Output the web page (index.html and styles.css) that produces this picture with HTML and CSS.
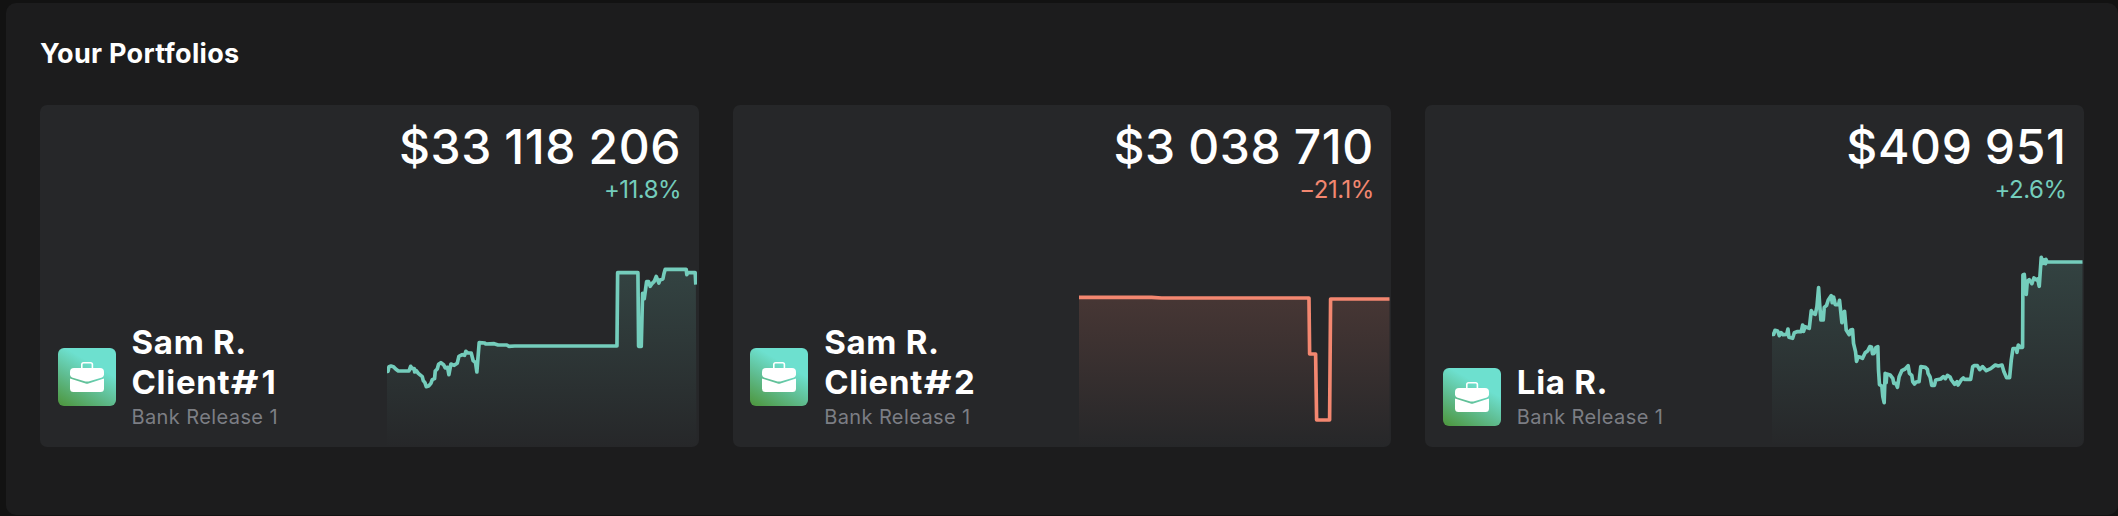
FILE: index.html
```
<!DOCTYPE html>
<html lang="en">
<head>
  <meta charset="UTF-8" />
  <meta name="viewport" content="width=device-width, initial-scale=1.0"/>
  <title>Your Portfolios</title>
  <link rel="stylesheet" href="styles.css">
</head>
<body>
  <svg class="defs" width="0" height="0">
    <defs>
      <linearGradient id="fillUp" x1="0" y1="0" x2="0" y2="1">
        <stop offset="0" stop-color="#74cdbc" stop-opacity="0.17"/>
        <stop offset="1" stop-color="#74cdbc" stop-opacity="0"/>
      </linearGradient>
      <linearGradient id="fillDown" x1="0" y1="0" x2="0" y2="1">
        <stop offset="0" stop-color="#f38770" stop-opacity="0.16"/>
        <stop offset="1" stop-color="#f38770" stop-opacity="0"/>
      </linearGradient>
      <symbol id="briefcase" viewBox="0 0 34 30">
        <path d="M11.8 7V2.6Q11.8 .8 13.6 .8H20.6Q22.4 .8 22.4 2.6V7" fill="none" stroke="#fff" stroke-width="1.6"/>
        <path d="M4 6H30Q34 6 34 10V12.5Q34 14.6 32 15.4L18.5 19.4Q17 19.8 15.5 19.4L2 15.4Q0 14.6 0 12.5V10Q0 6 4 6Z" fill="#fff"/>
        <path d="M0 16.6L15.6 21.6Q17 22 18.4 21.6L34 16.6V26.5Q34 30 30.5 30H3.5Q0 30 0 26.5Z" fill="#fff"/>
      </symbol>
    </defs>
  </svg>

  <section class="panel">
    <h2>Your Portfolios</h2>
    <div class="cards">

      <div class="card">
        <div class="owner">
          <div class="badge"><svg><use href="#briefcase"/></svg></div>
          <div>
            <div class="name">Sam R.<br>Client<span class="hash">#</span>1</div>
            <div class="bank">Bank Release 1</div>
          </div>
        </div>
        <div class="summary up">
          <div class="amount">$33 118 206</div>
          <div class="change">+11.8%</div>
          <svg class="chart" viewBox="36 -39 933 630" preserveAspectRatio="none">
            <path class="area" d="M36 364L42 349L54 350L70 363H102L107 349L120 362L143 380L156 410L166 404L178 386L182 363L190 343L198 338L212 353L218 352L222 374L227 343L245 342L252 319L267 314L274 304L289 309L295 332L302 338L306 366L312 278L400 286L420 288H727L729 68H790L792 289H800L803 130L809 145L816 96L827 108L845 80L853 98L865 85L872 58H935L937 72L940 68H962L964 104L966 591H36Z"/>
            <path class="line" d="M36 364H39L42 350L48 348L55 350L62 357L70 363H102L107 349L112 356L118 356L119 366L124 362L130 370L142 380L145 392L150 398L154 410L161 408L168 400L172 389L179 386L181 363L187 357L191 343L198 338L206 344L211 354L218 352L222 374L228 342L238 346L247 340L252 319L262 314L269 316L273 304L279 309L289 309L295 332L302 338L306 366L313 278L330 279L332 282L358 281L370 285L396 285L402 289L420 288H727L729 68H790L792 289H800L804 130L809 146L816 95H822L827 109L833 100L839 94L845 79L853 99L856 90L865 87L868 72L872 58H935L937 74L939 68H962L964 104"/>
          </svg>
        </div>
      </div>

      <div class="card">
        <div class="owner">
          <div class="badge"><svg><use href="#briefcase"/></svg></div>
          <div>
            <div class="name">Sam R.<br>Client<span class="hash">#</span>2</div>
            <div class="bank">Bank Release 1</div>
          </div>
        </div>
        <div class="summary down">
          <div class="amount">$3 038 710</div>
          <div class="change">−21.1%</div>
          <svg class="chart" viewBox="27 -99 933 630" preserveAspectRatio="none">
            <path class="area" d="M27 82H245L275 84H718L720 252H738L741 450H780L783 87H960V531H27Z"/>
            <path class="line" d="M27 82H245L275 84H718L720 252H738L741 450H780L783 87H960"/>
          </svg>
        </div>
      </div>

      <div class="card">
        <div class="owner">
          <div class="badge"><svg><use href="#briefcase"/></svg></div>
          <div>
            <div class="name">Lia R.</div>
            <div class="bank">Bank Release 1</div>
          </div>
        </div>
        <div class="summary up">
          <div class="amount">$409 951</div>
          <div class="change">+2.6%</div>
          <svg class="chart" viewBox="33 -9 933 630" preserveAspectRatio="none">
            <path class="area" d="M33 283L60 277L82 285L95 295L102 276L125 265L145 265L151 212L163 223L173 145L180 240L190 200L211 168L236 182L243 248L250 215L256 272L274 270L287 362L327 320L350 320L356 436L370 488L374 400L395 410L410 442L422 390L442 377L461 432L475 380L498 385L515 437L555 408L592 434L630 417L638 377L678 390L725 375L742 413L757 326L785 322L791 104L797 163L803 119L836 136L842 52L850 66H966V621H33Z"/>
            <path class="line" d="M33 283H38L42 271L50 273L55 287L60 278L66 284L77 283L81 267L84 292L95 295L100 278L108 275L121 275L125 255L128 274L132 260L145 265L151 212L156 220L163 223L168 200L173 143L176 190L180 240H187L190 202L197 196L202 180L211 167L214 188L218 171L223 194L233 194L236 181L243 248L246 222L251 214L256 270L265 284L269 270L275 269L278 310L284 335L287 364L292 350L299 352L305 355L313 338L321 332L327 320L332 321L335 341L340 340L345 323L351 320L353 390L356 434L363 438L366 470L370 488L373 400L376 428L378 402L388 405L396 415L399 430L405 430L410 442L415 410L423 392L433 387L442 377L446 400L453 406L456 425L461 432L466 426L475 425L480 380L494 382L500 388L502 400L508 411L513 436H521L525 420L540 417L548 410L554 416L560 406L568 411L572 420L582 433L589 425L592 435L602 419L608 414L612 418H630L636 380L640 377H650L657 389L666 380L677 392L690 386L704 375L713 378L724 375L730 395L738 413H747L752 360L757 326L768 326L769 337L773 315L780 322H786L787 105L791 103L797 163L800 125L806 119L814 131L820 114L828 120L831 117L836 139L842 52L848 70L851 60L855 71L856 58L860 66H966"/>
          </svg>
        </div>
      </div>

    </div>
  </section>
</body>
</html>
```
FILE: styles.css
```
* {
  box-sizing: border-box;
  margin: 0;
  padding: 0;
}

body {
  background-color: #121212;
  font-family: Inter, "Liberation Sans", sans-serif;
  color: #fff;
  height: 516px;
  padding: 3px 0 1px 6px;
  overflow: hidden;
}

.defs {
  position: absolute;
}

.panel {
  height: 512px;
  background-color: #1c1c1d;
  border-radius: 10px;
  padding: 35px 34px 0;
}

h2 {
  font-size: 27px;
  font-weight: 700;
  line-height: 32px;
  letter-spacing: 0.3px;
}

.cards {
  display: grid;
  grid-template-columns: repeat(3, 1fr);
  gap: 34px;
  margin-top: 35px;
}

.card {
  display: flex;
  justify-content: space-between;
  height: 342px;
  background-color: #262729;
  border-radius: 7px;
  overflow: hidden;
}

.owner {
  display: flex;
  align-items: center;
  align-self: flex-end;
  gap: 16px;
  padding: 0 0 15px 17.5px;
}

.badge {
  display: flex;
  align-items: center;
  justify-content: center;
  width: 58px;
  height: 58px;
  border-radius: 6px;
  background: linear-gradient(30deg, #4f9a45 5%, #5fbc90 38%, #6de0cf 68%);
}

.badge svg {
  width: 34px;
  height: 30px;
}

.name {
  font-size: 33px;
  font-weight: 700;
  line-height: 40px;
  letter-spacing: 0.7px;
}

.hash {
  display: inline-block;
  margin: 0 5px 0 4px;
  transform: scaleX(1.3);
}

.bank {
  font-size: 20px;
  line-height: 30px;
  letter-spacing: 0.4px;
  color: #7c7e84;
}

.summary {
  display: flex;
  flex-direction: column;
  width: 310.5px;
  margin-right: 1.5px;
  text-align: right;
}

.amount {
  padding: 13px 16px 0 0;
  font-size: 48px;
  font-weight: 500;
  line-height: 58px;
  letter-spacing: 0.6px;
  word-spacing: -1px;
  white-space: nowrap;
}

.change {
  padding-right: 16px;
  font-size: 24px;
  line-height: 28px;
  letter-spacing: -0.5px;
}

.chart {
  width: 100%;
  height: 210px;
  margin-top: auto;
}

.line {
  fill: none;
  stroke-width: 11;
  stroke-linejoin: round;
}

.up .change {
  color: #74cdbc;
}

.up .line {
  stroke: #74cdbc;
}

.up .area {
  fill: url(#fillUp);
}

.down .change {
  color: #f38770;
}

.down .line {
  stroke: #f38770;
}

.down .area {
  fill: url(#fillDown);
}
```
